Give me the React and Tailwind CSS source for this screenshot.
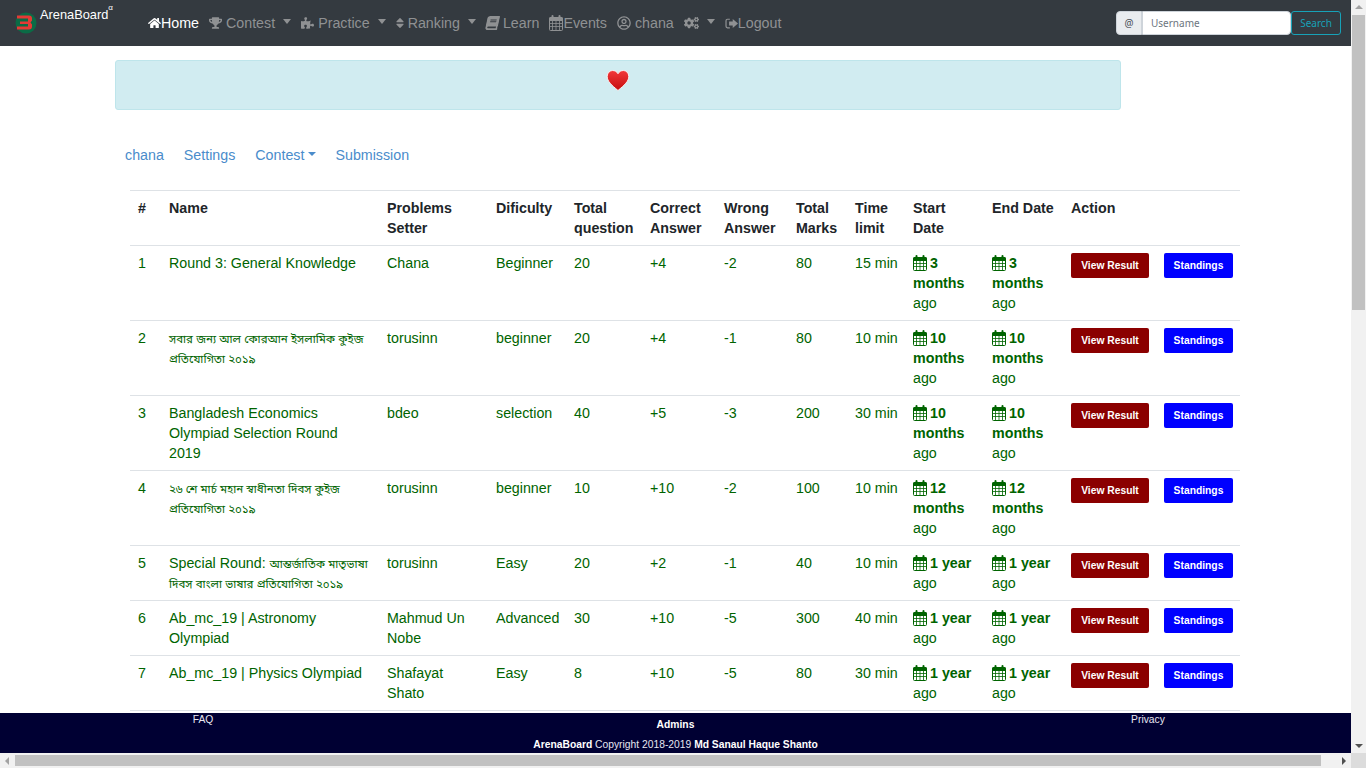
import React from "react";
import { FaHome, FaTrophy, FaPuzzlePiece, FaSort, FaBook, FaRegUserCircle, FaCogs } from "react-icons/fa";

function Cal({ className }) {
  return (
    <svg viewBox="0 0 14 16" className={className} fill="none" stroke="currentColor" strokeWidth="1">
      <path d="M.5 3.500a1 1 0 0 1 1-1h11a1 1 0 0 1 1 1v2H.5z" fill="currentColor" />
      <rect x=".5" y="2.500" width="13" height="13" rx="1" />
      <path d="M.5 8.500h13M.5 11.500h13M3.500 5.500v10M7 5.500v10M10.500 5.500v10" strokeWidth=".8" />
      <path d="M3.500 1v2.500M10.500 1v2.500" strokeWidth="2" strokeLinecap="round" />
    </svg>
  );
}

function Logout({ className }) {
  return (
    <svg viewBox="0 0 16 16" className={className} fill="currentColor">
      <path d="M6 2H3a2.500 2.500 0 0 0-2.500 2.500v7A2.500 2.500 0 0 0 3 14h3v-1.500H3a1 1 0 0 1-1-1v-7a1 1 0 0 1 1-1h3z" />
      <path d="M9.500 2.500 16 8l-6.500 5.500V10.500H5v-5h4.500z" />
    </svg>
  );
}

const Item = ({ icon, label, caret, active }) => (
  <a className={`flex items-center whitespace-nowrap ${active ? "text-white" : "text-[#8f9193]"}`}>
    {icon}
    {label && <span>{label}</span>}
    {caret && <span className="ml-[8px] w-0 h-0 border-x-[4.5px] border-x-transparent border-t-[5px] border-t-[#8f9193] -mt-[3px]" />}
  </a>
);

const Bn = ({ children }) => <span className="text-[11.5px] leading-[10px]">{children}</span>;

const rows = [
  ["1", "Round 3: General Knowledge", "Chana", "Beginner", "20", "+4", "-2", "80", "15 min", "3 months"],
  ["2", <Bn>সবার জন্য আল কোরআন ইসলামিক কুইজ প্রতিযোগিতা ২০১৯</Bn>, "torusinn", "beginner", "20", "+4", "-1", "80", "10 min", "10 months"],
  ["3", "Bangladesh Economics Olympiad Selection Round 2019", "bdeo", "selection", "40", "+5", "-3", "200", "30 min", "10 months"],
  ["4", <Bn>২৬ শে মার্চ মহান স্বাধীনতা দিবস কুইজ প্রতিযোগিতা ২০১৯</Bn>, "torusinn", "beginner", "10", "+10", "-2", "100", "10 min", "12 months"],
  ["5", <>Special Round: <Bn>আন্তর্জাতিক মাতৃভাষা দিবস বাংলা ভাষার প্রতিযোগিতা ২০১৯</Bn></>, "torusinn", "Easy", "20", "+2", "-1", "40", "10 min", "1 year"],
  ["6", "Ab_mc_19 | Astronomy Olympiad", "Mahmud Un Nobe", "Advanced", "30", "+10", "-5", "300", "40 min", "1 year"],
  ["7", "Ab_mc_19 | Physics Olympiad", "Shafayat Shato", "Easy", "8", "+10", "-5", "80", "30 min", "1 year"],
];

const Th = ({ children, className = "pl-[9px]" }) => (
  <th className={`pr-[8px] py-[7px] text-left align-top font-bold text-[#212529] ${className}`}>{children}</th>
);
const Td = ({ children, className = "pl-[9px]" }) => <td className={`pr-[8px] py-[7px] align-top ${className}`}>{children}</td>;
const DateCell = ({ v }) => (
  <Td>
    <Cal className="inline-block w-[14px] h-[16px] mr-[3px] -mt-[3px] align-middle" />
    <b>{v}</b> ago
  </Td>
);

export default function App() {
  return (
    <div className="flex flex-col w-[1366px] h-[768px] overflow-hidden bg-white font-['Liberation_Sans','Noto_Sans_Bengali','Noto_Sans',sans-serif] text-[14.25px] leading-[20px]">
      <div className="flex flex-1 min-h-0">
        <div className="flex flex-col flex-1 min-w-0">
          <nav className="h-[46px] shrink-0 bg-[#343a40] flex items-center">
            <a className="flex items-start w-[148px] shrink-0 pl-[15px] h-full">
              <svg viewBox="0 0 22 22" className="w-[22px] h-[22px] mt-[12px] shrink-0">
                <circle cx="11" cy="11" r="10.500" fill="#0b6b46" />
                <path d="M2 3.500h12a3 3 0 0 1 3 3v2l-1.500 2 1.500 2v2a3 3 0 0 1-3 3H2v-3h11v-2.500H5v-2.500h8V6.500H2z" fill="#e53935" />
              </svg>
              <span className="text-white text-[12.8px] leading-[20px] mt-[5px] ml-[3px]">ArenaBoard<sup className="text-[8px] align-super">α</sup></span>
            </a>
            <div className="flex items-center gap-[10px]">
              <Item active icon={<FaHome className="w-[13px] h-[14px] shrink-0" />} label="Home" />
              <Item icon={<FaTrophy className="w-[13px] h-[14px] mr-[4px] shrink-0" />} label="Contest" caret />
              <Item icon={<FaPuzzlePiece className="w-[13px] h-[14px] mr-[4px] shrink-0" />} label="Practice" caret />
              <Item icon={<FaSort className="w-[8px] h-[14px] mr-[4px] shrink-0" />} label="Ranking" caret />
              <Item icon={<FaBook className="w-[13px] h-[14px] mr-[4px] shrink-0 -skew-x-12" />} label="Learn" />
              <Item icon={<Cal className="w-[14px] h-[16px] shrink-0" />} label="Events" />
              <Item icon={<FaRegUserCircle className="w-[14px] h-[14px] mr-[4px] shrink-0" />} label="chana" />
              <Item icon={<FaCogs className="w-[15px] h-[14px] shrink-0" />} caret />
              <Item icon={<Logout className="w-[13px] h-[13px] shrink-0" />} label="Logout" />
            </div>
            <div className="ml-auto mr-[10px] flex items-center font-['Noto_Sans',sans-serif] text-[10px]">
              <span className="w-[26px] h-[24px] flex items-center justify-center bg-[#e9ecef] border border-[#ced4da] rounded-l-[4px] text-[#495057]">@</span>
              <span className="w-[149px] h-[24px] flex items-center pl-[8px] bg-white border border-[#ced4da] rounded-r-[4px] text-[#6c757d]">Username</span>
              <span className="w-[50px] h-[24px] flex items-center justify-center border border-[#17a2b8] rounded-[3px] text-[#17a2b8]">Search</span>
            </div>
          </nav>

          <main className="flex-1 min-h-0 overflow-hidden pl-[115px]">
            <div className="w-[1006px] h-[50px] mt-[14px] bg-[#d1ecf1] border border-[#bee5eb] rounded-[3px] flex justify-center pt-[9px]">
              <svg viewBox="1 1 20 19.500" className="w-[22px] h-[21px] overflow-visible">
                <defs>
                  <linearGradient id="h" x1="0" y1="0" x2="0" y2="1">
                    <stop offset="0" stopColor="#f2383a" />
                    <stop offset="1" stopColor="#c50d0d" />
                  </linearGradient>
                </defs>
                <path d="M11 20C5 15 1 11.500 1 7 1 3.500 3.500 1.500 6 1.500c2 0 4 1 5 3 1-2 3-3 5-3 2.500 0 5 2 5 5.500 0 4.500-4 8-10 13z" fill="url(#h)" stroke="#fff" strokeWidth=".8" />
              </svg>
            </div>
            <div className="flex mt-[35px] text-[#4a8ccb]">
              <a className="px-[10px]">chana</a>
              <a className="px-[10px]">Settings</a>
              <a className="px-[10px] flex items-center">Contest<span className="ml-[4px] -mt-[3px] w-0 h-0 border-x-[4px] border-x-transparent border-t-[4px] border-t-[#4a8ccb]" /></a>
              <a className="pl-[9px] pr-[10px]">Submission</a>
            </div>
            <div className="ml-[15px] mt-[25px] w-[1110px]">
              <table className="table-fixed w-[1110px] border-collapse text-[#006400]">
                <colgroup>
                  <col className="w-[30px]" />
                  <col className="w-[218px]" />
                  <col className="w-[109px]" />
                  <col className="w-[78px]" />
                  <col className="w-[76px]" />
                  <col className="w-[74px]" />
                  <col className="w-[72px]" />
                  <col className="w-[59px]" />
                  <col className="w-[58px]" />
                  <col className="w-[79px]" />
                  <col className="w-[79px]" />
                  <col className="w-[178px]" />
                </colgroup>
                <thead>
                  <tr className="border-t border-[#dee2e6]">
                    <Th className="pl-[8px]">#</Th>
                    <Th>Name</Th>
                    <Th>Problems Setter</Th>
                    <Th>Dificulty</Th>
                    <Th>Total question</Th>
                    <Th>Correct Answer</Th>
                    <Th>Wrong Answer</Th>
                    <Th>Total Marks</Th>
                    <Th>Time limit</Th>
                    <Th>Start Date</Th>
                    <Th>End Date</Th>
                    <Th>Action</Th>
                  </tr>
                </thead>
                <tbody>
                  {rows.map((r) => (
                    <tr key={r[0]} className="border-t border-[#dee2e6]">
                      {r.slice(0, 9).map((c, i) => (
                        <Td key={i} className={i === 0 ? "pl-[8px]" : i === 8 ? "pl-[9px] whitespace-nowrap" : "pl-[9px]"}>{c}</Td>
                      ))}
                      <DateCell v={r[9]} />
                      <DateCell v={r[9]} />
                      <Td>
                        <div className="flex gap-[15px] text-white text-[10.3px] font-bold leading-[15px]">
                          <a className="w-[78px] shrink-0 h-[25px] flex items-center justify-center bg-[#8b0000] rounded-[2px]">View Result</a>
                          <a className="w-[69px] shrink-0 h-[25px] flex items-center justify-center bg-[#0000ff] rounded-[2px]">Standings</a>
                        </div>
                      </Td>
                    </tr>
                  ))}
                  <tr className="border-t border-[#dee2e6]"><td colSpan={12} className="h-[40px]" /></tr>
                </tbody>
              </table>
            </div>
          </main>

          <footer className="h-[40px] shrink-0 bg-[#000033] text-[#e6e6f0] text-[10.3px] leading-[12px] grid grid-cols-[406px_1fr_406px] text-center">
            <a className="pt-[1px]">FAQ</a>
            <div className="flex flex-col items-center pt-[6px]">
              <b className="text-white">Admins</b>
              <span className="mt-[8px] whitespace-nowrap"><b className="text-white">ArenaBoard</b> Copyright 2018-2019 <b className="text-white">Md Sanaul Haque Shanto</b></span>
            </div>
            <a className="pt-[1px]">Privacy</a>
          </footer>
        </div>

        <div className="w-[15px] shrink-0 bg-[#f1f1f1] flex flex-col items-center">
          <span className="mt-[5px] w-0 h-0 border-x-[4px] border-x-transparent border-b-[4px] border-b-[#a3a3a3]" />
          <span className="mt-[6px] w-[13px] h-[295px] bg-[#c1c1c1]" />
          <span className="mt-auto mb-[5px] w-0 h-0 border-x-[4px] border-x-transparent border-t-[4px] border-t-[#505050]" />
        </div>
      </div>

      <div className="h-[15px] shrink-0 flex bg-[#f1f1f1]">
        <div className="flex-1 flex items-center">
          <span className="ml-[5px] w-0 h-0 border-y-[4px] border-y-transparent border-r-[4px] border-r-[#a3a3a3]" />
          <span className="ml-[6px] w-[1306px] h-[11px] bg-[#c1c1c1]" />
          <span className="ml-auto mr-[5px] w-0 h-0 border-y-[4px] border-y-transparent border-l-[4px] border-l-[#505050]" />
        </div>
        <div className="w-[15px] bg-[#dcdcdc]" />
      </div>
    </div>
  );
}
